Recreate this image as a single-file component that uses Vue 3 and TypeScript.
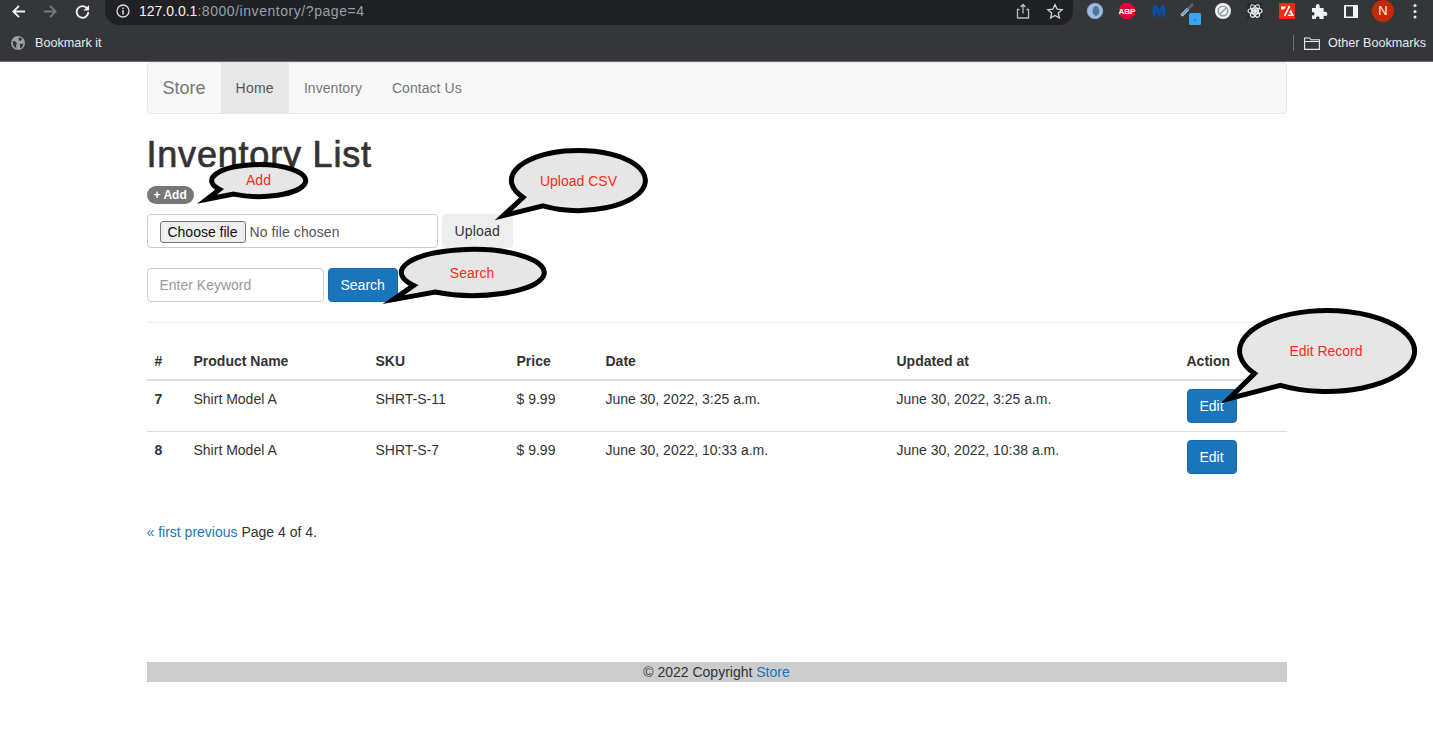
<template>
  <div class="page">
    <header class="browser">
      <div class="toolbar">
        <div class="nav-btns">
          <svg class="nav-icon" viewBox="0 0 16 16" fill="none" stroke="#f1f3f4" stroke-width="2">
            <path d="M15 8H2.500M8.500 2L2.500 8l6 6" />
          </svg>
          <svg class="nav-icon" viewBox="0 0 16 16" fill="none" stroke="#77787b" stroke-width="2">
            <path d="M1 8h12.500M7.500 2l6 6-6 6" />
          </svg>
          <svg class="nav-icon" viewBox="0 0 16 16" fill="none" stroke="#f1f3f4" stroke-width="2">
            <path d="M13 4.800A6.200 6.200 0 1 0 14.200 8.500" />
            <path d="M15 1v6h-6z" fill="#f1f3f4" stroke="none" />
          </svg>
        </div>
        <div class="omnibox">
          <svg class="info" viewBox="0 0 14 14" fill="none" stroke="#dadce0" stroke-width="1.300">
            <circle cx="7" cy="7" r="6" />
            <path d="M7 6v4.400M7 3.400v1.500" stroke-width="1.500" />
          </svg>
          <span class="url"><span class="host">127.0.0.1</span><span class="path">:8000/inventory/?page=4</span></span>
          <svg class="ext" viewBox="0 0 32 25" fill="none" stroke="#b8babc" stroke-width="1.300">
            <path d="M12.500 9.500H10.500v8.500h11V9.500h-2M16 13.500V4.500M13.500 7L16 4.500 18.500 7" />
          </svg>
          <svg class="ext" viewBox="0 0 32 25" fill="none" stroke="#d0d2d4" stroke-width="1.300">
            <path d="M16 4.500l2.100 4.700 5 .5-3.800 3.300 1.100 5L16 15.400l-4.400 2.600 1.100-5-3.800-3.300 5-.5z" />
          </svg>
        </div>
        <div class="extensions">
          <svg class="ext" viewBox="0 0 32 25">
            <circle cx="16" cy="11" r="7.800" fill="#9dbde0" />
            <circle cx="16" cy="11" r="7.800" fill="none" stroke="#7da3cf" stroke-width="0.800" />
            <ellipse cx="17" cy="11" rx="3.400" ry="5" fill="#4f76a3" />
          </svg>
          <svg class="ext" viewBox="0 0 32 25">
            <path d="M12.600 3h6.800L24 7.600v6.800L19.400 19h-6.800L8 14.400V7.600z" fill="#e8003c" />
            <text x="16" y="13.800" class="abp">ABP</text>
          </svg>
          <svg class="ext" viewBox="0 0 32 25">
            <path d="M10.800 16c-2-5-.8-9.500 1.700-11l3.500 5.500L19.500 5c2.500 1.500 3.700 6 1.700 11l-1.500 1.500c.4-3-.2-5.500-1-6.800L16 16.500l-2.700-5.800c-.8 1.300-1.400 3.800-1 6.800z" fill="#0b4fa6" stroke="#0b4fa6" stroke-width="0.800" />
          </svg>
          <svg class="ext" viewBox="0 0 32 25">
            <path d="M18 4l-5 5" stroke="#5f6265" stroke-width="2.500" />
            <path d="M13 9l-6.500 6.500" stroke="#dfeaf4" stroke-width="3" />
            <path d="M13 9l-6 6" stroke="#3f8fd6" stroke-width="1.600" />
            <rect x="14" y="13" width="12" height="12" rx="1.500" fill="#3aa3f2" />
            <circle cx="20" cy="20" r="0.700" fill="#14324d" />
          </svg>
          <svg class="ext" viewBox="0 0 32 25">
            <circle cx="16" cy="11" r="8" fill="#f1f3f4" />
            <circle cx="16" cy="11" r="4.800" fill="none" stroke="#8e9fb0" stroke-width="1.600" />
            <path d="M12.700 14.300L19.300 7.700" stroke="#8e9fb0" stroke-width="1.600" />
          </svg>
          <svg class="ext" viewBox="0 0 32 25" fill="none" stroke="#eceff1" stroke-width="1.200">
            <rect x="8" y="3" width="16" height="16" fill="#2b2c2f" stroke="none" />
            <ellipse cx="16" cy="11" rx="7" ry="2.800" />
            <ellipse cx="16" cy="11" rx="7" ry="2.800" transform="rotate(60 16 11)" />
            <ellipse cx="16" cy="11" rx="7" ry="2.800" transform="rotate(120 16 11)" />
            <circle cx="16" cy="11" r="1.400" fill="#eceff1" />
          </svg>
          <svg class="ext" viewBox="0 0 32 25">
            <rect x="8" y="3" width="16" height="16" fill="#f02a0c" />
            <path d="M10 6.500h5l-2 3h-3zM17.800 5.500l1.500 1-5 10-1.500-1zM18 12.500l2-3 3 6.500h-6.500l1-1.500h3z" fill="#fff" />
          </svg>
          <svg class="ext" viewBox="0 0 32 25">
            <path d="M9 8h4c-.6-3 .5-4 1.800-4s2.400 1 1.800 4h4v4c3-.6 3.700.6 3.700 1.900s-.7 2.500-3.700 1.900V19h-4c.4-2-.7-2.500-1.800-2.500S12.600 17 13 19H9v-3.500c2 .4 2.500-.7 2.500-1.700S11 11.600 9 12z" fill="#f1f3f4" />
          </svg>
          <svg class="ext" viewBox="0 0 32 25">
            <rect x="9" y="5" width="14" height="13" fill="#f1f3f4" />
            <rect x="11" y="6.500" width="7" height="10" fill="#35363a" />
          </svg>
          <div class="avatar-slot"><span class="avatar">N</span></div>
          <svg class="ext" viewBox="0 0 32 25" fill="#f1f3f4">
            <circle cx="16" cy="5.500" r="1.500" />
            <circle cx="16" cy="11.500" r="1.500" />
            <circle cx="16" cy="17" r="1.500" />
          </svg>
        </div>
      </div>
      <div class="bookmarks">
        <div class="bookmark">
          <svg class="globe" viewBox="0 0 14 14">
            <circle cx="7" cy="7" r="7" fill="#9aa0a6" />
            <path d="M1.500 5l3 .5 1.500 2-1 2 .5 3L2.500 10zM8 1.200l3.500 1.300-2 2.500-2-1zM9 8l3.500-.5-1.500 4L9 12z" fill="#35363a" />
          </svg>
          <span>Bookmark it</span>
        </div>
        <div class="bookmark other">
          <svg class="folder" viewBox="0 0 16 13" fill="none" stroke="#e8eaed" stroke-width="1.100">
            <path d="M.6 12.400V1h5l1.500 1.800h8.300v9.600zM.6 4.500h14.800" />
          </svg>
          <span>Other Bookmarks</span>
        </div>
      </div>
    </header>

    <div class="container">
      <nav class="navbar">
        <a class="brand">Store</a>
        <a
          v-for="link in navLinks"
          :key="link"
          class="nav-link"
          :class="{ active: link === 'Home' }"
        >{{ link }}</a>
      </nav>

      <h1>Inventory List</h1>
      <div class="add-row"><a class="badge">+ Add</a></div>

      <form class="form-row" @submit.prevent>
        <label class="control file-control">
          <span class="file-btn">Choose file</span>
          <span class="file-name">No file chosen</span>
        </label>
        <button class="btn btn-plain" type="button">Upload</button>
      </form>

      <form class="form-row" @submit.prevent>
        <input class="control search-control" type="text" placeholder="Enter Keyword" />
        <button class="btn btn-primary" type="button">Search</button>
      </form>

      <hr />

      <table class="table">
        <colgroup>
          <col v-for="width in colWidths" :key="width.id" :style="{ width: width.px + 'px' }" />
        </colgroup>
        <thead>
          <tr>
            <th>#</th>
            <th>Product Name</th>
            <th>SKU</th>
            <th>Price</th>
            <th>Date</th>
            <th>Updated at</th>
            <th>Action</th>
          </tr>
        </thead>
        <tbody>
          <tr v-for="row in rows" :key="row.id">
            <th>{{ row.id }}</th>
            <td>{{ row.name }}</td>
            <td>{{ row.sku }}</td>
            <td>{{ row.price }}</td>
            <td>{{ row.date }}</td>
            <td>{{ row.updated }}</td>
            <td><button class="btn btn-primary" type="button">Edit</button></td>
          </tr>
        </tbody>
      </table>

      <p class="pagination"><a>« first previous</a> Page 4 of 4.</p>

      <footer class="footer">© 2022 Copyright <a>Store</a></footer>
    </div>

    <svg class="callouts" viewBox="0 0 1433 737" width="1433" height="737">
      <g v-for="c in callouts" :key="c.label">
        <path :d="bubblePath(c)" class="bubble" />
        <text :x="c.tx" :y="c.ty" class="bubble-text">{{ c.label }}</text>
      </g>
    </svg>
  </div>
</template>

<script setup lang="ts">
type Callout = {
  label: string;
  cx: number;
  cy: number;
  rx: number;
  ry: number;
  tip: [number, number];
  tx: number;
  ty: number;
};

const STROKE = 5;

const navLinks = ['Home', 'Inventory', 'Contact Us'];

const colWidths = [39, 182, 141, 89, 291, 290, 108].map((px, id) => ({ id, px }));

const rows = [
  {
    id: 7,
    name: 'Shirt Model A',
    sku: 'SHRT-S-11',
    price: '$ 9.99',
    date: 'June 30, 2022, 3:25 a.m.',
    updated: 'June 30, 2022, 3:25 a.m.',
  },
  {
    id: 8,
    name: 'Shirt Model A',
    sku: 'SHRT-S-7',
    price: '$ 9.99',
    date: 'June 30, 2022, 10:33 a.m.',
    updated: 'June 30, 2022, 10:38 a.m.',
  },
];

const callouts: Callout[] = [
  { label: 'Add', cx: 258.5, cy: 180.5, rx: 47, ry: 16, tip: [198, 203], tx: 258.5, ty: 185 },
  { label: 'Upload CSV', cx: 578.5, cy: 180.5, rx: 67, ry: 30, tip: [497, 219], tx: 578.5, ty: 186 },
  { label: 'Search', cx: 473, cy: 272.5, rx: 71.5, ry: 23, tip: [385, 303], tx: 472, ty: 278 },
  { label: 'Edit Record', cx: 1327, cy: 351, rx: 87.5, ry: 40.5, tip: [1223, 402], tx: 1326, ty: 356 },
];

function pointAt(c: Callout, deg: number): [number, number] {
  const a = (deg * Math.PI) / 180;
  return [c.cx + c.rx * Math.cos(a), c.cy + c.ry * Math.sin(a)];
}

// the stroke's miter runs past the path's corner, so pull the corner back
// part of the way; the last hair of the miter is too thin to show anyway
function bubblePath(c: Callout) {
  const a = pointAt(c, 122);
  const b = pointAt(c, 146);
  const angA = Math.atan2(a[1] - c.tip[1], a[0] - c.tip[0]);
  const angB = Math.atan2(b[1] - c.tip[1], b[0] - c.tip[0]);
  const half = Math.abs(angA - angB) / 2;
  const pull = (0.6 * STROKE) / 2 / Math.sin(half);
  const mid = (angA + angB) / 2;
  const x = c.tip[0] + pull * Math.cos(mid);
  const y = c.tip[1] + pull * Math.sin(mid);
  return `M${a[0].toFixed(1)} ${a[1].toFixed(1)} A${c.rx} ${c.ry} 0 1 0 ${b[0].toFixed(1)} ${b[1].toFixed(1)} L${x.toFixed(1)} ${y.toFixed(1)} Z`;
}
</script>

<style scoped>
.page {
  position: relative;
  font-family: "Liberation Sans", Arial, sans-serif;
  font-size: 14px;
  line-height: 20px;
  color: #333;
}

.browser {
  background: #35363a;
  height: 62px;
  box-sizing: border-box;
  border-bottom: 1px solid #6a6b6e;
}
.toolbar {
  display: flex;
  height: 25px;
}
.nav-btns {
  display: flex;
  align-items: center;
  gap: 17px;
  width: 105px;
  padding: 0 0 3px 11px;
  box-sizing: border-box;
}
.nav-icon {
  width: 15px;
  height: 15px;
  flex: none;
}
.omnibox {
  width: 968px;
  display: flex;
  align-items: center;
  background: #202124;
  border-radius: 0 0 14px 14px;
  padding-left: 11px;
  padding-right: 2px;
  box-sizing: border-box;
}
.info {
  width: 14px;
  height: 14px;
  margin-right: 9px;
  margin-bottom: 3px;
}
.url {
  flex: 1;
  font-size: 14px;
  margin-bottom: 3px;
}
.host {
  color: #f1f3f4;
}
.path {
  color: #9aa0a6;
  letter-spacing: 0.55px;
}
.ext {
  width: 32px;
  height: 25px;
  flex: none;
}
.extensions {
  display: flex;
  margin-left: 6px;
}
.abp {
  fill: #fff;
  font-size: 8px;
  font-weight: 700;
  text-anchor: middle;
}
.avatar-slot {
  width: 32px;
  display: flex;
  justify-content: center;
}
.avatar {
  width: 22px;
  height: 22px;
  border-radius: 50%;
  background: #c42a03;
  color: #fff;
  font-size: 13px;
  line-height: 22px;
  text-align: center;
}
.bookmarks {
  display: flex;
  justify-content: space-between;
  align-items: center;
  height: 36px;
  padding: 0 7px 0 11px;
  color: #e8eaed;
  font-size: 12.6px;
}
.bookmark {
  display: flex;
  align-items: center;
  gap: 10px;
}
.globe {
  width: 14px;
  height: 14px;
}
.other {
  gap: 8px;
  border-left: 1px solid #6e6f73;
  padding-left: 10px;
  line-height: 16px;
}
.folder {
  width: 16px;
  height: 13px;
}

.container {
  width: 1170px;
  margin: 0 auto;
  padding: 0 15px;
  box-sizing: border-box;
}
.navbar {
  display: flex;
  height: 52px;
  box-sizing: border-box;
  background: #f8f8f8;
  border: 1px solid #e7e7e7;
  border-radius: 4px;
  margin-bottom: 20px;
}
.brand {
  padding: 15px;
  font-size: 18px;
  color: #777;
}
.nav-link {
  padding: 15px;
  color: #777;
  letter-spacing: 0.05px;
}
.nav-link.active {
  background: #e7e7e7;
  color: #555;
  letter-spacing: 0.25px;
}
h1 {
  margin: 0 0 10px;
  padding-top: 1px;
  font-size: 36px;
  font-weight: 400;
  line-height: 39px;
  letter-spacing: 0.8px;
  -webkit-text-stroke: 0.7px #333;
  color: #333;
}
.add-row {
  display: flex;
  align-items: flex-end;
  height: 20px;
  margin-bottom: 10px;
}
.badge {
  background: #777;
  color: #fff;
  font-size: 12px;
  font-weight: 700;
  line-height: 12px;
  padding: 3px 7px;
  border-radius: 10px;
}
.form-row {
  display: flex;
  gap: 4px;
  margin-bottom: 20px;
}
.control {
  height: 34px;
  box-sizing: border-box;
  padding: 6px 12px;
  border: 1px solid #ccc;
  border-radius: 4px;
  font-family: inherit;
  font-size: 14px;
  color: #555;
  background: #fff;
}
.control::placeholder {
  color: #999;
}
.file-control {
  width: 291px;
  display: flex;
  align-items: center;
  gap: 4px;
  padding-top: 7px;
  padding-bottom: 5px;
}
.file-btn {
  width: 86px;
  height: 22px;
  box-sizing: border-box;
  color: #111;
  background: #efefef;
  border: 1px solid #767676;
  border-radius: 3px;
  line-height: 20px;
  text-align: center;
}
.file-name {
  letter-spacing: 0.1px;
}
.search-control {
  width: 177px;
}
.btn {
  height: 34px;
  box-sizing: border-box;
  padding: 6px 12px;
  border: 1px solid transparent;
  border-radius: 4px;
  font-family: inherit;
  font-size: 14px;
  line-height: 20px;
}
.btn-plain {
  background: #eee;
  color: #333;
  letter-spacing: 0.2px;
}
.btn-primary {
  background: #1b75bb;
  border-color: #1b6aa8;
  color: #fff;
}
hr {
  margin: 0 0 20px;
  border: 0;
  border-top: 1px solid #eee;
}
.table {
  width: 1140px;
  table-layout: fixed;
  border-collapse: collapse;
  margin-bottom: 40px;
}
.table th,
.table td {
  padding: 8px;
  text-align: left;
  vertical-align: top;
  border-top: 1px solid #ddd;
}
.table thead th {
  border-top: 0;
  border-bottom: 2px solid #ddd;
}
.table tbody tr:first-child th,
.table tbody tr:first-child td {
  border-top: 0;
}
.pagination {
  margin: 0 0 120px;
}
.pagination a,
.footer a {
  color: #1b75bb;
}
.footer {
  background: #ccc;
  text-align: center;
  height: 20px;
  color: #333;
}

.callouts {
  position: absolute;
  left: 0;
  top: 0;
  pointer-events: none;
}
.bubble {
  fill: #e6e6e6;
  stroke: #000;
  stroke-width: 5;
  stroke-linejoin: miter;
  stroke-miterlimit: 20;
}
.bubble-text {
  fill: #ff2a17;
  font-size: 14px;
  text-anchor: middle;
}
</style>
